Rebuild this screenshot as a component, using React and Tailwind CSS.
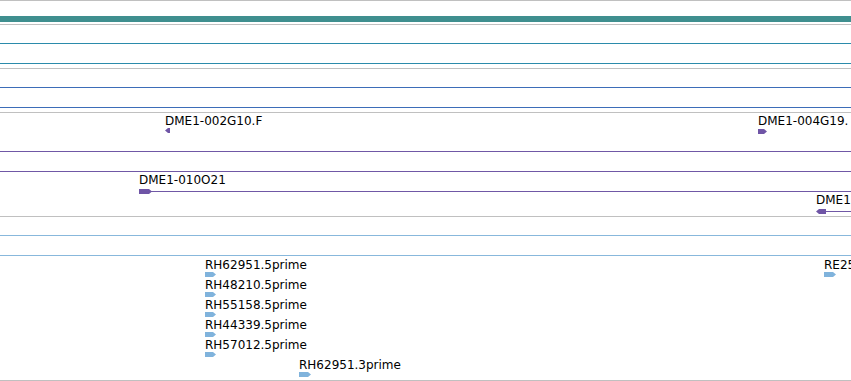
import React from 'react';

const GRAY = 'bg-[#c0c0c0]';

const Arrow = ({ dir = 'right', color, w = 10, h = 5 }) => {
  const pts =
    dir === 'right'
      ? `0,0 ${w - 3},0 ${w},${h / 2} ${w - 3},${h} 0,${h}`
      : `${w},0 3,0 0,${h / 2} 3,${h} ${w},${h}`;
  return (
    <svg width={w} height={h} className="block">
      <polygon points={pts} fill={color} />
    </svg>
  );
};

const Label = ({ children }) => (
  <div className="text-[12px] leading-[12px] text-black whitespace-nowrap">{children}</div>
);

// feature = label above a small arrow; x/y are its place on the track canvas
const Feature = ({ x, y, name, dir, color, w = 10, h = 5, gap = 1 }) => (
  <div className="absolute flex flex-col" style={{ left: x, top: y }}>
    <Label>{name}</Label>
    <div style={{ marginTop: gap }}>
      <Arrow dir={dir} color={color} w={w} h={h} />
    </div>
  </div>
);

const Line = ({ c }) => <div className={`h-px ${c}`} />;
const Gap = ({ h }) => <div className={h} />;

const PURPLE = '#6f55a6';
const LBLUE = '#80b3dc';

const rh = ['RH62951.5prime', 'RH48210.5prime', 'RH55158.5prime', 'RH44339.5prime', 'RH57012.5prime'];

export default function App() {
  return (
    <div
      className="w-[851px] h-[381px] overflow-hidden bg-white flex flex-col"
      style={{ fontFamily: '"DejaVu Sans", "Liberation Sans", sans-serif' }}
    >
      <Line c={GRAY} />
      <Gap h="h-[15px]" />
      <div className="h-[6px] bg-[#3f8f8f]" />
      <Gap h="h-[2px]" />
      <Line c={GRAY} />

      <Gap h="h-[18px]" />
      <Line c="bg-[#2b8bab]" />
      <Gap h="h-[19px]" />
      <Line c="bg-[#2b8bab]" />
      <Gap h="h-[4px]" />
      <Line c={GRAY} />

      <Gap h="h-[18px]" />
      <Line c="bg-[#3d6db8]" />
      <Gap h="h-[19px]" />
      <Line c="bg-[#3d6db8]" />
      <Gap h="h-[4px]" />
      <Line c={GRAY} />

      {/* cDNA clone ends */}
      <div className="relative h-[38px]">
        <Feature x={165} y={2} name="DME1-002G10.F" dir="left" color={PURPLE} w={5} h={5} gap={1} />
        <Feature x={758} y={2} name="DME1-004G19." dir="right" color={PURPLE} w={9} h={5} gap={2} />
      </div>
      <Line c="bg-[#7058a6]" />
      <Gap h="h-[19px]" />
      <Line c="bg-[#7058a6]" />

      <div className="relative h-[44px]">
        <div className="absolute left-[139px] right-0 top-[19px] h-px bg-[#7058a6]" />
        <Feature x={139} y={2} name="DME1-010O21" dir="right" color={PURPLE} w={13} h={5} gap={3} />
        <div className="absolute left-[826px] right-0 top-[39px] h-px bg-[#7058a6]" />
        <Feature x={816} y={22} name="DME1" dir="left" color={PURPLE} w={10} h={5} gap={3} />
      </div>
      <Line c={GRAY} />

      <Gap h="h-[18px]" />
      <Line c="bg-[#88b8dc]" />
      <Gap h="h-[19px]" />
      <Line c="bg-[#88b8dc]" />

      {/* EST reads */}
      <div className="relative h-[124px]">
        {rh.map((n, i) => (
          <Feature key={n} x={205} y={3 + i * 20} name={n} dir="right" color={LBLUE} w={11} h={5} gap={1} />
        ))}
        <Feature x={299} y={103} name="RH62951.3prime" dir="right" color={LBLUE} w={12} h={5} gap={1} />
        <Feature x={824} y={3} name="RE25" dir="right" color={LBLUE} w={12} h={5} gap={1} />
      </div>
      <Line c={GRAY} />
    </div>
  );
}
